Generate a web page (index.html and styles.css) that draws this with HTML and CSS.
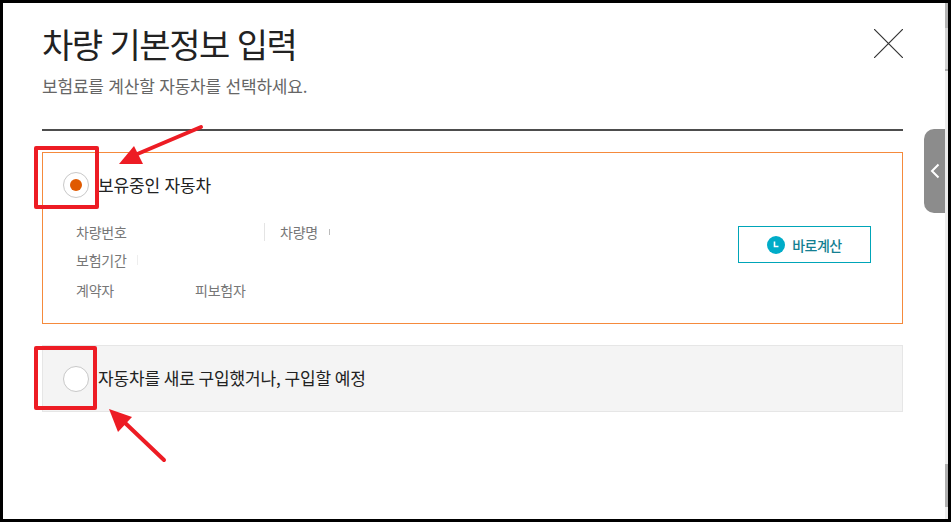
FILE: index.html
```html
<!DOCTYPE html>
<html lang="ko">
<head>
  <meta charset="UTF-8" />
  <title>차량 기본정보 입력</title>
  <link rel="stylesheet" href="styles.css">
</head>
<body>
  <div class="frame">
    <div class="modal">
      <div class="modal-head">
        <div>
          <h2>차량 기본정보 입력</h2>
          <p class="subtitle">보험료를 계산할 자동차를 선택하세요.</p>
        </div>
        <button class="close-btn" aria-label="닫기">
          <svg width="29" height="29" viewBox="0 0 29 29"><path d="M0 0L29 29M29 0L0 29" stroke="#333" stroke-width="1.2" fill="none"/></svg>
        </button>
      </div>

      <!-- 보유중인 자동차 -->
      <div class="option option-on">
        <div class="option-title">
          <span class="radio radio-on"></span>
          <span class="option-text">보유중인 자동차</span>
        </div>
        <div class="option-body">
          <div class="info">
            <div class="info-row">
              <span class="label label-car">차량번호</span>
              <span class="divider"></span>
              <span class="label">차량명</span>
              <span class="tick tick-round"></span>
            </div>
            <div class="info-row">
              <span class="label">보험기간</span>
              <span class="tick"></span>
            </div>
            <div class="info-row info-row-last">
              <span class="label label-owner">계약자</span>
              <span class="label">피보험자</span>
            </div>
          </div>
          <button class="calc-btn">
            <svg width="18" height="18" viewBox="0 0 18 18"><circle cx="9" cy="9" r="9" fill="#00acc8"/><path d="M7.5 5.5V10.5H11.5" stroke="#fff" stroke-width="1.6" fill="none"/></svg>
            바로계산
          </button>
        </div>
      </div>

      <!-- 신규 구입 -->
      <div class="option option-off">
        <div class="option-title">
          <span class="radio"></span>
          <span class="option-text">자동차를 새로 구입했거나, 구입할 예정</span>
        </div>
      </div>
    </div>

    <div class="scrollbar">
      <span class="thumb"></span>
      <span class="track-upper"></span>
      <span class="track-line"></span>
      <span class="track-fill"></span>
      <span class="thumb-low"></span>
      <span class="track-end"></span>
    </div>
    <button class="side-tab" aria-label="열기">
      <svg width="10" height="16" viewBox="0 0 10 16"><path d="M8.5 1.5L2 8L8.5 14.5" stroke="#fff" stroke-width="2" fill="none"/></svg>
    </button>
  </div>

  <!-- 캡처 위에 그린 표시 -->
  <span class="mark mark-top"></span>
  <span class="mark mark-bottom"></span>
  <svg class="arrows" width="951" height="522" viewBox="0 0 951 522">
    <path d="M201 127L135 155" stroke="#ed1c24" stroke-width="4" stroke-linecap="round" fill="none"/>
    <path d="M119 164L134 146L143 164Z" fill="#ed1c24"/>
    <path d="M164 460L122 420" stroke="#ed1c24" stroke-width="4" stroke-linecap="round" fill="none"/>
    <path d="M109 409L132 417L118 432Z" fill="#ed1c24"/>
  </svg>
</body>
</html>
```

FILE: styles.css
```css
* { margin: 0; padding: 0; box-sizing: border-box; }
body {
  width: 951px;
  height: 522px;
  overflow: hidden;
  background: #fff;
  font-family: "Noto Sans CJK KR", "Noto Sans", sans-serif;
  color: #222;
}
button { font-family: inherit; background: none; border: none; }

.frame {
  position: relative;
  display: flex;
  width: 951px;
  height: 522px;
  border: 3px solid #000;
  background: #fff;
}

.modal { flex: 1; padding: 0 42px 0 39px; }

.modal-head {
  display: flex;
  justify-content: space-between;
  height: 128px;
  border-bottom: 2px solid #4d4d4d;
  padding-top: 19px;
}
.modal-head h2 {
  font-size: 34px;
  font-weight: 400;
  line-height: 43px;
  letter-spacing: -1.5px;
  color: #222;
}
.subtitle {
  margin-top: 9px;
  font-size: 17px;
  line-height: 24px;
  color: #666;
  letter-spacing: -0.2px;
}
.close-btn { height: 29px; margin-top: 7px; }

/* Options */
.option { width: 861px; }
.option-on {
  height: 172px;
  margin-top: 21px;
  border: 1px solid #f58a3c;
}
.option-off {
  height: 67px;
  margin-top: 21px;
  border: 1px solid #e6e6e6;
  background: #f4f4f4;
}
.option-title {
  display: flex;
  align-items: center;
  gap: 9px;
  height: 64px;
  padding-left: 20px;
  font-size: 17px;
  letter-spacing: -0.15px;
  color: #222;
}
.option-text { padding-bottom: 2px; }
.radio {
  width: 26px;
  height: 26px;
  border: 1px solid #c8c8c8;
  border-radius: 50%;
  background: #fff;
  display: flex;
  align-items: center;
  justify-content: center;
}
.radio-on::after {
  content: "";
  width: 12px;
  height: 12px;
  border-radius: 50%;
  background: #e05a00;
}
.option-off .option-title { height: 65px; word-spacing: -0.8px; }

.option-body {
  display: flex;
  justify-content: space-between;
  padding: 5px 31px 0 33px;
}
.info { display: flex; flex-direction: column; gap: 8px; }
.info-row {
  display: flex;
  align-items: center;
  height: 20px;
  font-size: 14px;
  letter-spacing: -0.25px;
  color: #777;
}
.info-row-last { margin-top: 2px; }
.label-car { width: 188px; }
.label-owner { width: 119px; }
.divider { width: 1px; height: 18px; background: #e4e4e4; margin-right: 15px; }
.tick { width: 1px; height: 10px; margin-left: 10px; background: #eee; }
.tick-round { height: 6px; margin-left: 11px; background: #bbb; }

.calc-btn {
  display: flex;
  align-items: center;
  justify-content: center;
  gap: 7px;
  width: 133px;
  height: 37px;
  margin-top: 4px;
  border: 1px solid #00a5b8;
  background: #fff;
  font-size: 14px;
  font-weight: 500;
  letter-spacing: -0.5px;
  color: #147f92;
}

/* Scrollbar */
.scrollbar {
  width: 3px;
  display: flex;
  flex-direction: column;
  background: #ececec;
}
.thumb { height: 25px; background: #b4b4b4; }
.track-upper { height: 41px; background: #d2d2d2; }
.track-line { height: 2px; background: #aaa; }
.track-fill { flex: 1; }
.thumb-low { height: 43px; background: #b0b0b0; }
.track-end { height: 12px; }

.side-tab {
  position: absolute;
  top: 126px;
  right: 3px;
  display: flex;
  align-items: center;
  justify-content: center;
  width: 21px;
  height: 84px;
  background: #8c8c8c;
  border-radius: 10px 0 0 10px;
}

/* Annotations */
.mark {
  position: absolute;
  border: 4px solid #ed1c24;
  border-radius: 2px;
}
.mark-top { left: 34px; top: 146px; width: 65px; height: 63px; }
.mark-bottom { left: 34px; top: 346px; width: 63px; height: 64px; }
.arrows { position: absolute; left: 0; top: 0; }
```
